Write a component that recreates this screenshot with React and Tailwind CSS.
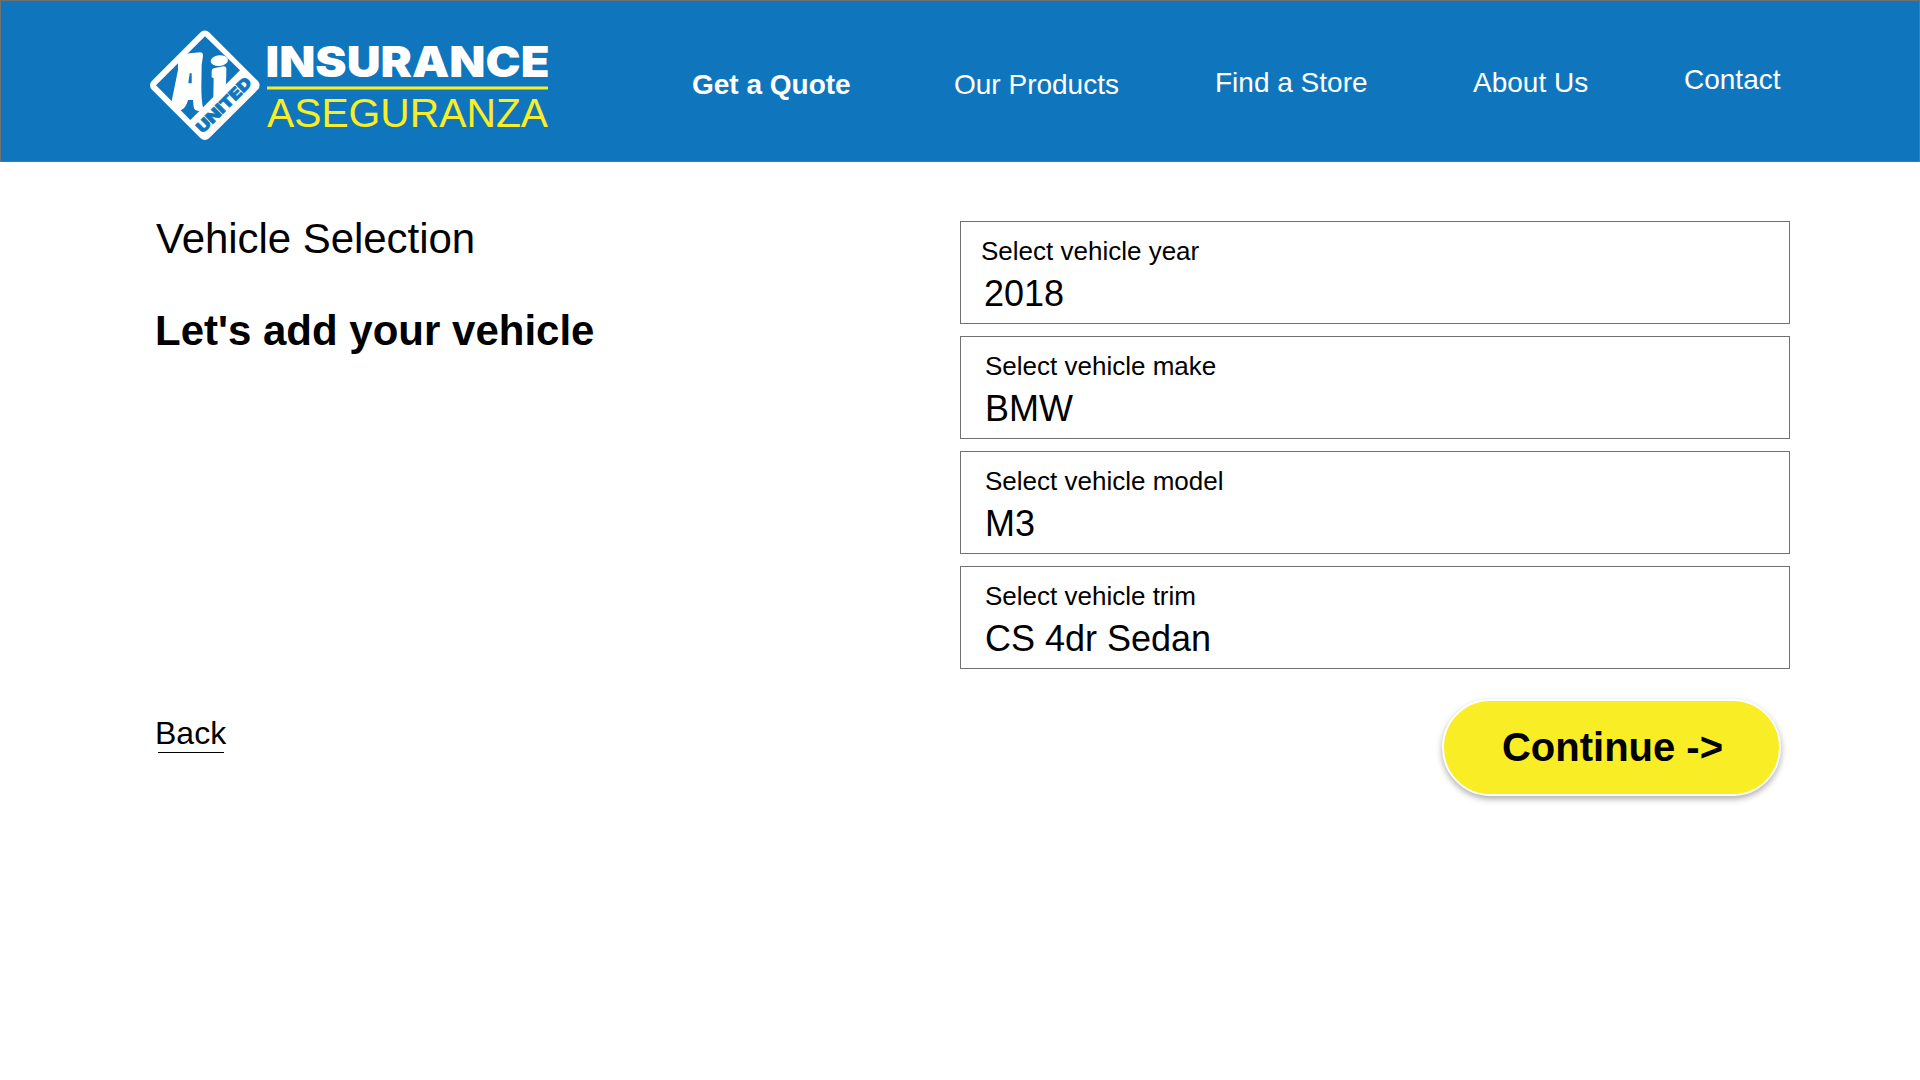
const FONT = "font-['Liberation_Sans',Arial,sans-serif]";

function Logo() {
  return (
    <svg className="block h-[162px] w-[420px]" viewBox="140 0 420 162" aria-label="AI United Insurance">
      <g transform="translate(140 20) scale(0.33333)">
        <rect x="73" y="74.5" width="243" height="243" rx="18" transform="rotate(45 194.5 196)" fill="#fff" />
        <path d="M195 49L300 151L151 300L48 196Z" fill="#0f76bd" />
        <path
          d="M110 122L135 103Q148 99 165 98L180 97Q190 98 189 107L185 135L184 200Q184 240 189 263L151 301L94 248Q104 200 114 150L114 130Z"
          fill="#fff"
        />
        <path d="M149 160L155 160L155 190L145 190Z" fill="#0f76bd" />
        <path d="M144 240L159 240L161 260Q163 273 178 273L151 300L122 271Q138 264 144 240Z" fill="#0f76bd" />
        <ellipse cx="238" cy="122" rx="26" ry="16" transform="rotate(-6 238 122)" fill="#fff" />
        <path d="M215 156Q214 145 224 144L250 139Q261 139 259 151L258 195L215 238L220 232L221 175L215 172Z" fill="#fff" />
        <text
          x="188"
          y="342"
          transform="rotate(-45 188 342)"
          textLength="213"
          lengthAdjust="spacingAndGlyphs"
          className="font-['Inter',sans-serif] text-[47px] font-black"
          fill="#0f76bd"
          stroke="#0f76bd"
          strokeWidth="2"
        >
          UNITED
        </text>
      </g>
      <text
        x="265.5"
        y="77"
        textLength="284"
        lengthAdjust="spacingAndGlyphs"
        className="font-['Inter',sans-serif] text-[42px] font-black"
        fill="#fff"
      >
        INSURANCE
      </text>
      <rect x="267" y="86.5" width="281" height="3" fill="#f9ed25" />
      <text
        x="267"
        y="126.5"
        textLength="281"
        lengthAdjust="spacingAndGlyphs"
        className="font-['Liberation_Sans',Arial,sans-serif] text-[41.5px]"
        fill="#f9ed25"
      >
        ASEGURANZA
      </text>
    </svg>
  );
}

const NAV = [
  { label: "Get a Quote", cls: "ml-[132px] w-[262px] pt-[69px] font-bold" },
  { label: "Our Products", cls: "w-[261px] pt-[69px]" },
  { label: "Find a Store", cls: "w-[258px] pt-[67px]" },
  { label: "About Us", cls: "w-[211px] pt-[67px]" },
  { label: "Contact", cls: "pt-[64px]" },
];

const FIELDS = [
  { label: "Select vehicle year", value: "2018", labelCls: "pl-[20px]", valueCls: "pl-[23px]" },
  { label: "Select vehicle make", value: "BMW", labelCls: "pl-[24px]", valueCls: "pl-[24px]" },
  { label: "Select vehicle model", value: "M3", labelCls: "pl-[24px]", valueCls: "pl-[24px]" },
  { label: "Select vehicle trim", value: "CS 4dr Sedan", labelCls: "pl-[24px]", valueCls: "pl-[24px]" },
];

export default function App() {
  return (
    <div className={`h-[1080px] w-[1920px] overflow-hidden bg-white text-black ${FONT}`}>
      <header className="h-[162px] border border-[#707070] bg-[#0f76bd]">
        <div className="-mt-px flex pl-[139px]">
          <Logo />
          <nav className="flex text-[28px] leading-8 whitespace-nowrap text-white">
            {NAV.map((n) => (
              <a key={n.label} href="#" className={n.cls}>
                {n.label}
              </a>
            ))}
          </nav>
        </div>
      </header>
      <main className="flex pl-[155px]">
        <section className="w-[805px] whitespace-nowrap">
          <h2 className="mt-[53px] ml-px text-[42px] leading-12 tracking-[-0.05px]">Vehicle Selection</h2>
          <h1 className="mt-[44px] text-[42px] leading-12 font-bold">Let's add your vehicle</h1>
          <a href="#" className="mt-[360px] block w-[72px] text-[32px] leading-9">
            Back
            <span className="mt-px ml-[3px] block h-px w-[66px] bg-black" />
          </a>
        </section>
        <section className="mt-[59px] w-[830px]">
          <div className="flex flex-col gap-3">
            {FIELDS.map((f) => (
              <div key={f.label} className="h-[103px] border border-[#707070] bg-white">
                <div className={`mt-[14px] text-[26px] leading-[30px] ${f.labelCls}`}>{f.label}</div>
                <div className={`mt-[8px] text-[36px] leading-10 ${f.valueCls}`}>{f.value}</div>
              </div>
            ))}
          </div>
          <button className="mt-[30px] ml-[482px] block h-[97px] w-[339px] rounded-full border-2 border-white bg-[#f9ed25] pb-[2px] pl-[2px] text-[40px] font-bold shadow-[0_3px_6px_rgba(0,0,0,0.32)]">
            Continue -&gt;
          </button>
        </section>
      </main>
    </div>
  );
}
